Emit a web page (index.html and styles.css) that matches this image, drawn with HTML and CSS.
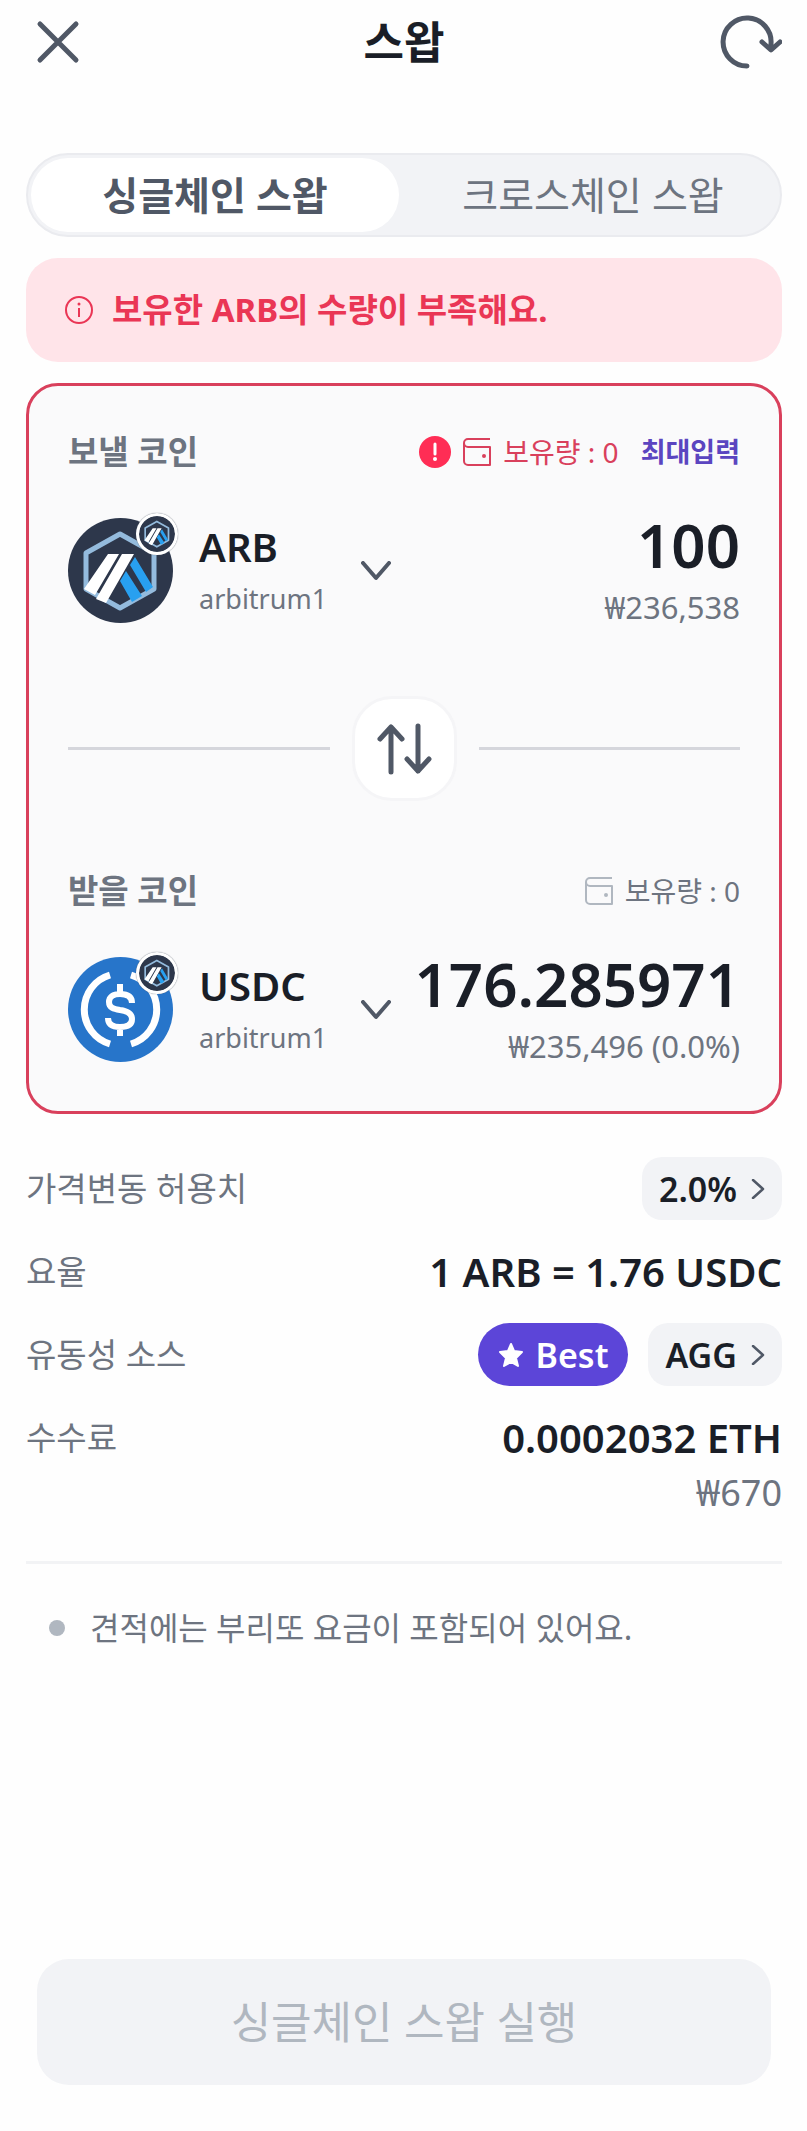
FILE: index.html
```html
<!DOCTYPE html>
<html lang="ko">
<head>
<meta charset="utf-8">
<meta name="viewport" content="width=device-width, initial-scale=1">
<title>스왑</title>
<link rel="stylesheet" href="styles.css">
</head>
<body>

<!-- shared shapes -->
<svg class="defs" width="0" height="0" aria-hidden="true">
	<symbol id="arb" viewBox="0 0 105 105">
		<circle cx="52.5" cy="52.5" r="52.5" fill="#2d374b"/>
		<path d="M52 16 86 35v36L52 90 18 71V35z" fill="none" stroke="#94bbdd" stroke-width="5" stroke-linejoin="round"/>
		<path d="M40 36h11L27 77 16 71zM54 36h12L38 85l-10-4z" fill="#fff"/>
		<path d="M67 39 85 69l-7 5-16-27zM58 53l16 25-10 6-12-21z" fill="#28a0f0"/>
	</symbol>
	<symbol id="usdc" viewBox="0 0 105 105">
		<circle cx="52.5" cy="52.5" r="52.5" fill="#2775ca"/>
		<path d="M42 18a36 36 0 0 0 0 69M63 18a36 36 0 0 1 0 69" fill="none" stroke="#fff" stroke-width="7"/>
		<path d="M64 46c0-6-4-9-12-9-7 0-11 3-11 8 0 6 5 7 11 8 7 1 12 3 12 9 0 5-4 8-12 8s-12-3-12-9M52 27v10M52 70v9" fill="none" stroke="#fff" stroke-width="6"/>
	</symbol>
	<symbol id="wallet" viewBox="0 0 28 28">
		<path d="M27 1H5a4 4 0 0 0 0 8h22v18H5a4 4 0 0 1-4-4V5" fill="none" stroke="currentColor" stroke-width="2" stroke-linejoin="round"/>
		<circle cx="21" cy="18" r="2" fill="currentColor"/>
	</symbol>
	<symbol id="down" viewBox="0 0 30 20">
		<path d="M2 2 15 17 28 2" fill="none" stroke="currentColor" stroke-width="4" stroke-linecap="round" stroke-linejoin="round"/>
	</symbol>
	<symbol id="next" viewBox="0 0 14 20">
		<path d="M2 1 12 10 2 19" fill="none" stroke="currentColor" stroke-width="2.5" stroke-linecap="round" stroke-linejoin="round"/>
	</symbol>
</svg>

<div class="page">

	<header class="header">
		<button class="icon-button" aria-label="닫기">
			<svg width="64" height="64" viewBox="0 0 64 64"><path d="M14 14 50 50M50 14 14 50" fill="none" stroke="currentColor" stroke-width="5" stroke-linecap="round"/></svg>
		</button>
		<h1>스왑</h1>
		<button class="icon-button" aria-label="새로고침">
			<svg width="64" height="64" viewBox="0 0 64 64"><path d="M29 56A24 24 0 1 1 53 34M44 32l9 8 9-8" fill="none" stroke="currentColor" stroke-width="5" stroke-linecap="round" stroke-linejoin="round"/></svg>
		</button>
	</header>

	<nav class="tabs">
		<button class="tab active">싱글체인 스왑</button>
		<button class="tab">크로스체인 스왑</button>
	</nav>

	<p class="alert">
		<svg width="30" height="30" viewBox="0 0 30 30"><circle cx="15" cy="15" r="13" fill="none" stroke="currentColor" stroke-width="2"/><path d="M15 13v9" stroke="currentColor" stroke-width="2"/><circle cx="15" cy="9" r="1.5" fill="currentColor"/></svg>
		보유한 ARB의 수량이 부족해요.
	</p>

	<section class="card">

		<div class="coin-head">
			<label class="coin-label" for="amount">보낼 코인</label>
			<div class="balance error">
				<svg width="32" height="32" viewBox="0 0 32 32"><circle cx="16" cy="16" r="16" fill="#ff2d55"/><path d="M16 8v10" stroke="#fff" stroke-width="3" stroke-linecap="round"/><circle cx="16" cy="23" r="2" fill="#fff"/></svg>
				<svg width="28" height="28"><use href="#wallet"/></svg>
				<span>보유량 : 0</span>
				<button class="max">최대입력</button>
			</div>
		</div>
		<div class="coin">
			<button class="picker">
				<span class="logo">
					<svg width="105" height="105"><use href="#arb"/></svg>
					<svg class="badge" width="42" height="42"><use href="#arb" width="36" height="36"/></svg>
				</span>
				<span class="name"><b>ARB</b><small>arbitrum1</small></span>
				<svg width="30" height="20"><use href="#down"/></svg>
			</button>
			<div class="amount">
				<input id="amount" type="text" inputmode="decimal" value="100">
				<small>₩236,538</small>
			</div>
		</div>

		<div class="divider">
			<button class="switch" aria-label="코인 바꾸기">
				<svg width="56" height="52" viewBox="0 0 56 52"><path d="M15 49V4M4 16 15 4l11 12M42 3v45M31 36l11 12 11-12" fill="none" stroke="currentColor" stroke-width="5" stroke-linecap="round" stroke-linejoin="round"/></svg>
			</button>
		</div>

		<div class="coin-head">
			<span class="coin-label">받을 코인</span>
			<div class="balance">
				<svg width="28" height="28"><use href="#wallet"/></svg>
				<span>보유량 : 0</span>
			</div>
		</div>
		<div class="coin">
			<button class="picker">
				<span class="logo">
					<svg width="105" height="105"><use href="#usdc"/></svg>
					<svg class="badge" width="42" height="42"><use href="#arb" width="36" height="36"/></svg>
				</span>
				<span class="name"><b>USDC</b><small>arbitrum1</small></span>
				<svg width="30" height="20"><use href="#down"/></svg>
			</button>
			<div class="amount">
				<output>176.285971</output>
				<small>₩235,496 (0.0%)</small>
			</div>
		</div>

	</section>

	<dl class="details">
		<div class="row">
			<dt>가격변동 허용치</dt>
			<dd><button class="chip">2.0% <svg width="14" height="20"><use href="#next"/></svg></button></dd>
		</div>
		<div class="row">
			<dt>요율</dt>
			<dd>1 ARB = 1.76 USDC</dd>
		</div>
		<div class="row">
			<dt>유동성 소스</dt>
			<dd>
				<span class="best">
					<svg width="26" height="26" viewBox="0 0 26 26"><path d="M13 2l3 7 8 1-6 6 2 8-7-4-7 4 2-8-6-6 8-1z" fill="currentColor" stroke="currentColor" stroke-width="2" stroke-linejoin="round"/></svg>
					Best
				</span>
				<button class="chip">AGG <svg width="14" height="20"><use href="#next"/></svg></button>
			</dd>
		</div>
		<div class="row">
			<dt>수수료</dt>
			<dd>0.0002032 ETH</dd>
		</div>
	</dl>
	<p class="fee">₩670</p>

	<ul class="notes">
		<li>견적에는 부리또 요금이 포함되어 있어요.</li>
	</ul>

	<button class="submit" disabled>싱글체인 스왑 실행</button>

</div>

</body>
</html>
```

FILE: styles.css
```css
* {
	box-sizing: border-box;
}

body {
	margin: 0;
	background-color: #fefefe;
	color: #1a1e27;
	font-family: "Noto Sans", "Noto Sans CJK KR", sans-serif;
	font-size: 33px;
	line-height: 48px;
}

h1, p, dl, dd, ul {
	margin: 0;
	padding: 0;
}

button, input {
	margin: 0;
	padding: 0;
	border: 0;
	background: none;
	color: inherit;
	font: inherit;
}

svg {
	display: block;
	flex: none;
}

.defs {
	position: absolute;
}

.page {
	display: flex;
	flex-direction: column;
	min-height: 100vh;
	padding: 10px 25px 46px 26px;
}

.header {
	display: flex;
	justify-content: space-between;
	align-items: center;
	height: 64px;
	margin-bottom: 79px;
}

.header h1 {
	font-size: 44px;
	font-weight: 700;
}

.icon-button {
	color: #505866;
}

.tabs {
	display: grid;
	grid-template-columns: 1fr 1fr;
	gap: 10px;
	height: 84px;
	padding: 3px;
	border: 2px solid #eaebef;
	border-radius: 42px;
	background-color: #f2f3f6;
}

.tab {
	border-radius: 37px;
	color: #6d7480;
	font-size: 39px;
}

.tab.active {
	background-color: #fff;
	color: #505866;
	font-weight: 700;
}

.alert {
	display: flex;
	align-items: center;
	gap: 18px;
	height: 104px;
	margin: 21px 0;
	padding: 0 38px;
	border-radius: 32px;
	background-color: #ffe4e9;
	color: #ea3655;
	font-weight: 700;
}

.card {
	padding: 42px 39px 49px;
	border: 3px solid #d9405c;
	border-radius: 32px;
	background-color: #fafafb;
}

.coin-head {
	display: flex;
	justify-content: space-between;
	align-items: center;
}

.coin-label {
	color: #6d7480;
	font-weight: 700;
}

.balance {
	display: flex;
	align-items: center;
	gap: 12px;
	color: #6d7480;
	font-size: 28px;
}

.balance svg {
	color: #b0b7c0;
}

.balance.error,
.balance.error svg {
	color: #d9405c;
}

.max {
	margin-left: 10px;
	color: #5b45c0;
	font-size: 27px;
	font-weight: 700;
}

.coin {
	display: flex;
	justify-content: space-between;
	align-items: center;
	height: 105px;
	margin-top: 42px;
}

.picker {
	display: flex;
	align-items: center;
	text-align: left;
	color: #505866;
}

.logo {
	position: relative;
	margin-right: 26px;
}

.badge {
	position: absolute;
	top: -5px;
	right: -5px;
	padding: 3px;
	border-radius: 50%;
	background-color: #fff;
	box-shadow: 0 0 1px #505866;
}

.name {
	width: 162px;
}

.name b {
	display: block;
	color: #1a1e27;
	font-size: 40px;
	font-weight: 600;
	line-height: 56px;
}

small {
	display: block;
	color: #6d7480;
	font-size: 27px;
}

.amount {
	flex: 1;
	min-width: 0;
	text-align: right;
}

.amount input,
.amount output {
	display: block;
	width: 100%;
	height: 72px;
	font-size: 60px;
	font-weight: 600;
	line-height: 72px;
	text-align: right;
}

.amount small {
	font-size: 31px;
	line-height: 52px;
}

.divider {
	display: flex;
	align-items: center;
	gap: 22px;
	margin: 73px 0 66px;
}

.divider::before,
.divider::after {
	content: "";
	flex: 1;
	height: 3px;
	background-color: #d5d6dc;
}

.switch {
	display: flex;
	align-items: center;
	justify-content: center;
	width: 105px;
	height: 105px;
	border: 3px solid #f5f5f7;
	border-radius: 40px;
	background-color: #fff;
	color: #505866;
}

.details {
	margin-top: 43px;
}

.row {
	display: flex;
	justify-content: space-between;
	align-items: center;
	height: 63px;
	margin-bottom: 20px;
}

.row:last-child {
	margin-bottom: 0;
}

.row dt {
	color: #6d7480;
}

.row dd {
	display: flex;
	align-items: center;
	gap: 20px;
	font-size: 40px;
	font-weight: 600;
}

.chip,
.best {
	display: flex;
	align-items: center;
	gap: 14px;
	height: 63px;
	padding: 0 17px;
	border-radius: 20px;
	background-color: #f2f3f6;
	font-size: 34px;
	font-weight: 600;
}

.chip svg {
	color: #505866;
}

.best {
	gap: 12px;
	padding: 0 20px;
	border-radius: 32px;
	background-color: #5c45d8;
	color: #fff;
}

.fee {
	color: #6d7480;
	font-size: 36px;
	text-align: right;
}

.notes {
	margin-top: 44px;
	padding-top: 40px;
	border-top: 3px solid #f2f3f5;
	list-style: none;
	color: #6d7480;
	font-size: 32px;
}

.notes li {
	display: flex;
	align-items: center;
	gap: 25px;
	padding-left: 23px;
}

.notes li::before {
	content: "";
	width: 16px;
	height: 16px;
	border-radius: 50%;
	background-color: #b0b7c0;
}

.submit {
	height: 126px;
	margin: auto 11px 0;
	border-radius: 32px;
	background-color: #f2f3f6;
	color: #b0b7c0;
	font-size: 44px;
}
```
